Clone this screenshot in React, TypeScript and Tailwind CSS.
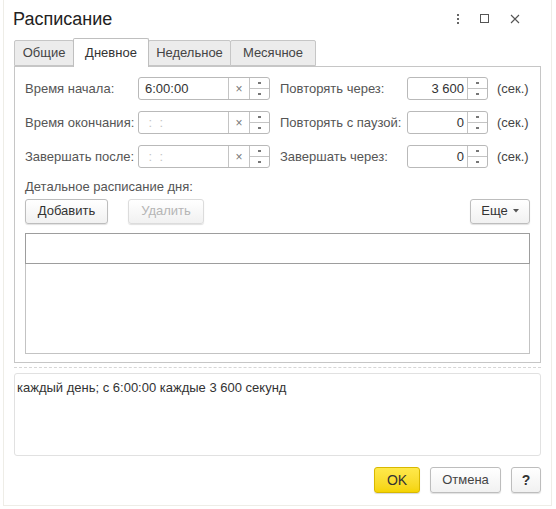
import React from 'react';

const font = { fontFamily: '"Liberation Sans", Arial, sans-serif' };

function Spinner({ className = '' }: { className?: string }) {
    return (
        <div className={`flex flex-col w-[20px] h-full border-l border-[#c4c4c4] ${className}`}>
            <div className="flex-1 flex items-center justify-center border-b border-[#c4c4c4]">
                <span className="block w-[3px] h-[2px] bg-[#777]" />
            </div>
            <div className="flex-1 flex items-center justify-center">
                <span className="block w-[3px] h-[2px] bg-[#777]" />
            </div>
        </div>
    );
}

function TimeField({ value }: { value?: string }) {
    return (
        <div className="flex h-[23px] w-[132px] border border-[#b9b9b9] rounded-[3px] bg-white">
            <div className={`flex-1 flex items-center pl-[6px] text-[13px] ${value ? 'text-[#333]' : 'text-[#c4c4c4]'}`}>
                {value ?? '\u00a0:\u00a0\u00a0:'}
            </div>
            <div className="w-[21px] flex items-center justify-center border-l border-[#c4c4c4] text-[#777] text-[12px]">×</div>
            <Spinner />
        </div>
    );
}

function NumField({ value }: { value: string }) {
    return (
        <div className="flex h-[23px] w-[81px] border border-[#b9b9b9] rounded-[3px] bg-white">
            <div className="flex-1 flex items-center justify-end pr-[3px] text-[13px] text-[#333]">{value}</div>
            <Spinner className="w-[17px]" />
        </div>
    );
}

function Button({ children, disabled, className = '' }: { children: React.ReactNode; disabled?: boolean; className?: string }) {
    return (
        <button
            className={`h-[25px] border rounded-[3px] text-[13px] bg-gradient-to-b from-white to-[#f1f1f1] shadow-[0_1px_1px_rgba(0,0,0,0.12)] ${
                disabled ? 'border-[#dcdcdc] text-[#b5b5b5]' : 'border-[#bdbdbd] text-[#333]'
            } ${className}`}
        >
            {children}
        </button>
    );
}

export default function App() {
    const tabs = [
        { t: 'Общие', w: 'w-[60px]' },
        { t: 'Дневное', w: 'w-[76px]' },
        { t: 'Недельное', w: 'w-[83px]' },
        { t: 'Месячное', w: 'w-[86px]' },
    ];
    const left = [
        { label: 'Время начала:', value: '6:00:00' },
        { label: 'Время окончания:' },
        { label: 'Завершать после:' },
    ];
    const right = [
        { label: 'Повторять через:', value: '3 600' },
        { label: 'Повторять с паузой:', value: '0' },
        { label: 'Завершать через:', value: '0' },
    ];

    return (
        <div className="w-[556px] h-[509px] bg-white" style={font}>
            <div className="h-[506px] ml-[3px] mr-[4px] border-l border-r border-b border-[#eeede7] flex flex-col">
                {/* Header */}
                <div className="h-[37px] flex items-center pl-[9px] pr-[31px]">
                    <div className="text-[18px] text-[#222] flex-1 pt-[1px]">Расписание</div>
                    <div className="flex items-center gap-[21px] text-[#666]">
                        <span className="flex flex-col gap-[2px]">
                            <span className="w-[2px] h-[2px] bg-[#666]" />
                            <span className="w-[2px] h-[2px] bg-[#666]" />
                            <span className="w-[2px] h-[2px] bg-[#666]" />
                        </span>
                        <span className="w-[9px] h-[9px] border border-[#555]" />
                        <svg width="10" height="10" viewBox="0 0 10 10">
                            <path d="M1 1L9 9M9 1L1 9" stroke="#555" strokeWidth="1.1" />
                        </svg>
                    </div>
                </div>

                {/* Tabs */}
                <div className="flex items-end ml-[10px] h-[29px]">
                    {tabs.map(({ t, w }, i) =>
                        i === 1 ? (
                            <div key={t} className={`${w} h-[29px] -ml-px flex items-center justify-center text-[13px] text-[#333] bg-white border border-b-0 border-[#bfbfbf] rounded-t-[2px] relative -mb-px z-10`}>
                                {t}
                            </div>
                        ) : (
                            <div key={t} className={`${w} h-[26px] flex items-center justify-center text-[13px] text-[#444] bg-[#ececec] border border-[#c6c6c6] rounded-t-[2px] -ml-px first:ml-0`}>
                                {t}
                            </div>
                        )
                    )}
                </div>

                {/* Panel */}
                <div className="mx-[10px] h-[297px] border border-[#c6c6c6] px-[10px] pt-[10px] flex flex-col">
                    <div className="flex">
                        <div className="flex flex-col gap-[11px]">
                            {left.map((r) => (
                                <div key={r.label} className="flex items-center">
                                    <div className="w-[113px] text-[13px] text-[#555]">{r.label}</div>
                                    <TimeField value={r.value} />
                                </div>
                            ))}
                        </div>
                        <div className="flex flex-col gap-[11px] ml-[10px]">
                            {right.map((r) => (
                                <div key={r.label} className="flex items-center">
                                    <div className="w-[127px] text-[13px] text-[#555]">{r.label}</div>
                                    <NumField value={r.value} />
                                    <div className="ml-[9px] text-[13px] text-[#444]">(сек.)</div>
                                </div>
                            ))}
                        </div>
                    </div>

                    <div className="mt-[9px] text-[13px] text-[#555]">Детальное расписание дня:</div>
                    <div className="flex mt-[2px]">
                        <Button className="w-[83px]">Добавить</Button>
                        <Button disabled className="w-[76px] ml-[20px]">Удалить</Button>
                        <Button className="w-[60px] ml-auto flex items-center justify-center gap-[5px]">
                            Еще
                            <svg width="6" height="4" viewBox="0 0 6 4">
                                <path d="M0 0H6L3 3.5Z" fill="#555" />
                            </svg>
                        </Button>
                    </div>
                    <div className="mt-[9px] h-[121px] border border-[#c3c3c3]">
                        <div className="h-[31px] border-[1.5px] border-[#9d9d9d] -m-px bg-white" />
                    </div>
                </div>

                {/* Separator */}
                <div className="mx-[10px] mt-[4px] border-t border-dashed border-[#d6d6d6]" />

                {/* Description */}
                <div className="mx-[10px] mt-[5px] h-[83px] border border-[#e1e1e1] rounded-[3px] px-[2px] pt-[4px] text-[13px] text-[#333]">
                    каждый день; с 6:00:00 каждые 3 600 секунд
                </div>

                {/* Footer */}
                <div className="flex justify-end items-center mt-[11px] mr-[10px] gap-[10px]">
                    <button className="h-[26px] w-[46px] rounded-[3px] border border-[#d8b800] bg-gradient-to-b from-[#ffe94a] to-[#f5d400] text-[14px] text-[#333] shadow-[0_1px_1px_rgba(0,0,0,0.15)]">
                        OK
                    </button>
                    <Button className="h-[26px] w-[71px] text-[#444]">Отмена</Button>
                    <Button className="h-[26px] w-[30px] font-bold text-[14px]">?</Button>
                </div>
            </div>
        </div>
    );
}
